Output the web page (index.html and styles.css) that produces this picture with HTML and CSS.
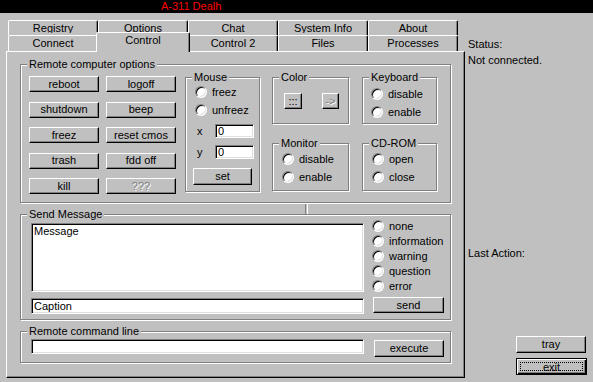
FILE: index.html
```html
<!DOCTYPE html>
<html lang="en">
<head>
  <meta charset="UTF-8" />
  <title>A-311 Dealh</title>
  <link rel="stylesheet" href="styles.css">
</head>
<body>
  <div class="titlebar">A-311 Dealh</div>

  <div class="main">
    <div class="tabctl">
      <div class="tabrow back">
        <div class="tab"><span>Registry</span></div>
        <div class="tab"><span>Options</span></div>
        <div class="tab"><span>Chat</span></div>
        <div class="tab"><span>System Info</span></div>
        <div class="tab"><span>About</span></div>
      </div>
      <div class="tabrow front">
        <div class="tab">Connect</div>
        <div class="tab active">Control</div>
        <div class="tab">Control 2</div>
        <div class="tab">Files</div>
        <div class="tab">Processes</div>
      </div>

      <div class="panel">
        <div class="group options">
          <span class="legend">Remote computer options</span>

          <div class="btn-grid">
            <button class="btn">reboot</button>
            <button class="btn">logoff</button>
            <button class="btn">shutdown</button>
            <button class="btn">beep</button>
            <button class="btn">freez</button>
            <button class="btn">reset cmos</button>
            <button class="btn">trash</button>
            <button class="btn">fdd off</button>
            <button class="btn">kill</button>
            <button class="btn" disabled>???</button>
          </div>

          <div class="group mouse">
            <span class="legend">Mouse</span>
            <label class="opt first"><span class="radio"></span>freez</label>
            <label class="opt"><span class="radio"></span>unfreez</label>
            <div class="coord first"><span>x</span><input class="field" value="0"></div>
            <div class="coord"><span>y</span><input class="field" value="0"></div>
            <button class="btn set">set</button>
          </div>

          <div class="col mid">
            <div class="group color">
              <span class="legend">Color</span>
              <div class="color-btns">
                <button class="btn tiny">:::</button>
                <button class="btn tiny" disabled>-&gt;</button>
              </div>
            </div>
            <div class="group monitor">
              <span class="legend">Monitor</span>
              <label class="opt first"><span class="radio"></span>disable</label>
              <label class="opt"><span class="radio"></span>enable</label>
            </div>
          </div>

          <div class="col right">
            <div class="group keyboard">
              <span class="legend">Keyboard</span>
              <label class="opt first"><span class="radio"></span>disable</label>
              <label class="opt"><span class="radio"></span>enable</label>
            </div>
            <div class="group cdrom">
              <span class="legend">CD-ROM</span>
              <label class="opt first"><span class="radio"></span>open</label>
              <label class="opt"><span class="radio"></span>close</label>
            </div>
          </div>
        </div>

        <div class="seam"></div>

        <div class="group message">
          <span class="legend">Send Message</span>
          <div class="msg-fields">
            <textarea class="field msg-text">Message</textarea>
            <input class="field caption" value="Caption">
          </div>
          <div class="msg-types">
            <label class="opt"><span class="radio"></span>none</label>
            <label class="opt"><span class="radio"></span>information</label>
            <label class="opt"><span class="radio"></span>warning</label>
            <label class="opt"><span class="radio"></span>question</label>
            <label class="opt"><span class="radio"></span>error</label>
            <button class="btn send">send</button>
          </div>
        </div>

        <div class="group cmdline">
          <span class="legend">Remote command line</span>
          <input class="field cmd" value="">
          <button class="btn execute">execute</button>
        </div>
      </div>
    </div>

    <div class="side">
      <div class="line">Status:</div>
      <div class="line">Not connected.</div>
      <div class="line last-action">Last Action:</div>
      <button class="btn side-btn tray">tray</button>
      <button class="btn side-btn default"><span class="focus">exit</span></button>
    </div>
  </div>
</body>
</html>
```

FILE: styles.css
```css
* {
  box-sizing: border-box;
  margin: 0;
  padding: 0;
}

body {
  width: 593px;
  height: 382px;
  overflow: hidden;
  background: #c0c0c0;
  font-family: 'Liberation Sans', Arial, sans-serif;
  font-size: 11px;
  line-height: 13px;
  color: #000;
}

.titlebar {
  height: 13px;
  background: #000;
  color: #ff0000;
  padding-left: 161px;
}

.main {
  display: flex;
}

/* tab control */
.tabctl {
  width: 459px;
  margin-left: 6px;
}

.tabrow {
  display: flex;
  padding-left: 2px;
}

.tabrow.back {
  margin-top: 7px;
}

.tab {
  width: 90px;
  height: 15px;
  padding-top: 1px;
  text-align: center;
  background: #c0c0c0;
  border-top: 1px solid #fff;
  border-left: 1px solid #fff;
  border-right: 1px solid #000;
  border-radius: 2px 2px 0 0;
  box-shadow: inset -1px 0 #808080;
}

.back .tab span {
  display: block;
  height: 11px;
  overflow: hidden;
}

.front .tab {
  height: 16px;
  position: relative;
}

.front .tab.active {
  width: 94px;
  height: 20px;
  margin: -3px -2px -1px;
  z-index: 1;
}

.panel {
  width: 459px;
  height: 327px;
  padding-top: 12px;
  padding-left: 13px;
  border: 1px solid;
  border-color: #fff #000 #000 #fff;
  box-shadow: inset -1px -1px #808080;
}

/* etched group box */
.group {
  position: relative;
  border: 1px solid #808080;
  box-shadow: inset 1px 1px #fff, 1px 1px #fff;
}

.legend {
  position: absolute;
  top: -7px;
  left: 6px;
  padding: 0 2px;
  background: #c0c0c0;
  white-space: nowrap;
}

/* buttons */
.btn {
  font: inherit;
  line-height: 13px;
  color: #000;
  background: #c0c0c0;
  border: 1px solid;
  border-color: #fff #000 #000 #fff;
  box-shadow: inset -1px -1px #808080;
  height: 16px;
}

.btn:disabled {
  color: #808080;
  text-shadow: 1px 1px #fff;
}

.field {
  font: inherit;
  line-height: 13px;
  background: #fff;
  border: 1px solid;
  border-color: #808080 #fff #fff #808080;
  box-shadow: inset 1px 1px #000, inset -1px -1px #dfdfdf;
  padding: 0 2px;
  outline: none;
}

.radio {
  display: inline-block;
  width: 12px;
  height: 12px;
  flex: none;
  border-radius: 50%;
  border: 1px solid;
  border-color: #808080 #fff #fff #808080;
  background: #fff;
  box-shadow: inset 1px 1px #000, inset -1px -1px #dfdfdf;
}

.opt {
  display: flex;
  align-items: center;
  gap: 5px;
  height: 12px;
  white-space: nowrap;
}

/* remote computer options */
.options {
  display: flex;
  align-items: flex-start;
  width: 431px;
  height: 139px;
}

.btn-grid {
  display: grid;
  grid-template-columns: 70px 70px;
  grid-auto-rows: 16px;
  column-gap: 7px;
  row-gap: 9.5px;
  margin: 11px 0 0 8px;
}

.mouse {
  width: 75px;
  height: 115px;
  margin: 12px 0 0 9px;
  display: flex;
  flex-direction: column;
}

.mouse .opt {
  margin: 6px 0 0 9px;
}

.mouse .opt.first {
  margin-top: 8px;
}

.coord {
  display: flex;
  align-items: center;
  margin: 7px 0 0 11px;
}

.coord.first {
  margin-top: 8px;
}

.coord span {
  width: 18px;
}

.coord .field {
  width: 39px;
  height: 14px;
}

.btn.set {
  width: 59px;
  height: 17px;
  margin: 9px 0 0 7px;
}

.col {
  display: flex;
  flex-direction: column;
  gap: 19px;
  margin-top: 12px;
}

.col.mid {
  width: 77px;
  margin-left: 12px;
}

.col.right {
  width: 75px;
  margin-left: 13px;
}

.color,
.keyboard {
  height: 47px;
}

.monitor,
.cdrom {
  height: 48px;
}

.color-btns {
  display: flex;
  gap: 20px;
  margin: 15px 0 0 11px;
}

.btn.tiny {
  width: 18px;
}

.btn.tiny:disabled {
  width: 17px;
}

.monitor .opt,
.keyboard .opt,
.cdrom .opt {
  margin: 6px 0 0 9px;
}

.monitor .opt.first,
.cdrom .opt.first {
  margin-top: 9px;
}

.keyboard .opt {
  margin-left: 8px;
}

.keyboard .opt.first {
  margin-top: 10px;
}

.seam {
  width: 2px;
  height: 11px;
  margin-left: 285px;
  border-left: 1px solid #808080;
  box-shadow: 1px 0 #fff;
}

/* send message */
.message {
  display: flex;
  width: 431px;
  height: 106px;
}

.msg-fields {
  display: flex;
  flex-direction: column;
  margin: 8px 0 0 10px;
}

.msg-text {
  width: 333px;
  height: 69px;
  padding: 1px 2px;
  resize: none;
  overflow: hidden;
}

.caption {
  width: 333px;
  height: 16px;
  margin-top: 6px;
}

.msg-types {
  display: flex;
  flex-direction: column;
  gap: 3px;
  margin: 5px 0 0 8px;
}

.btn.send {
  width: 71px;
  margin: 2px 0 0 1px;
}

/* command line */
.cmdline {
  display: flex;
  align-items: flex-start;
  width: 431px;
  height: 32px;
  margin-top: 11px;
}

.cmd {
  width: 333px;
  height: 15px;
  margin: 7px 0 0 10px;
}

.btn.execute {
  width: 70px;
  height: 17px;
  margin: 8px 0 0 10px;
}

/* right side */
.side {
  display: flex;
  flex-direction: column;
  align-items: flex-start;
  padding: 23px 0 0 3px;
}

.line {
  line-height: 16px;
}

.last-action {
  margin-top: 177px;
}

.side-btn {
  width: 70px;
  height: 17px;
  margin-left: 48px;
}

.tray {
  margin-top: 75px;
}

.side-btn.default {
  width: 71px;
  margin-top: 5px;
  padding: 3px;
  border: 1px solid #000;
  box-shadow: inset 1px 1px #fff, inset -1px -1px #000, inset -2px -2px #808080;
}

.focus {
  display: block;
  height: 100%;
  border: 1px dotted #000;
  line-height: 8px;
}
```
